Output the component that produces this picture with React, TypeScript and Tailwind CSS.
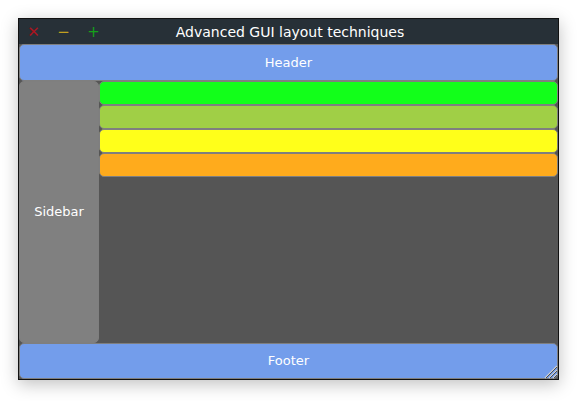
const bars = ['bg-[#12ff1a]', 'bg-[#a0cf46]', 'bg-[#ffff1a]', 'bg-[#ffab1c]'];

function ResizeGrip() {
  return (
    <svg width="14" height="14" viewBox="0 0 14 14" className="absolute bottom-0 right-0">
      <path d="M1 13L13 1M5 13L13 5M9 13L13 9" stroke="#d0d0d0" strokeWidth="1.2" />
      <path d="M2 13L13 2M6 13L13 6M10 13L13 10" stroke="#333" strokeWidth="0.8" />
    </svg>
  );
}

export default function App() {
  return (
    <div className="w-[580px] h-[401px] bg-white pt-[18px] pl-[18px]" style={{ fontFamily: "'DejaVu Sans', sans-serif" }}>
      <div className="relative w-[541px] h-[362px] flex flex-col border border-[#111] bg-[#555555] shadow-[0_4px_16px_rgba(0,0,0,0.25)]">
        {/* Title bar */}
        <div className="relative h-[25px] bg-[#273037] flex items-center shrink-0">
          <div className="flex items-center gap-[17px] pl-[8px] pt-[2px] text-[15px] leading-none">
            <span className="w-[13px] text-center text-[#a8141f]">✕</span>
            <span className="w-[13px] text-center text-[#c2a020]">−</span>
            <span className="w-[13px] text-center text-[#15a11a]">+</span>
          </div>
          <div className="absolute inset-0 flex items-center justify-center text-white text-[14px] pl-[3px] pt-[2px]">
            Advanced GUI layout techniques
          </div>
        </div>

        {/* Header */}
        <div className="h-[37px] shrink-0 rounded-[5px] border border-[#7f7f7f] bg-[#739deb] text-white text-[13px] flex items-center justify-center">
          Header
        </div>

        {/* Middle */}
        <div className="flex flex-1 min-h-0">
          <div className="w-[80px] shrink-0 rounded-[5px] border border-[#7f7f7f] bg-[#808080] text-white text-[13px] flex items-center justify-center">
            Sidebar
          </div>
          <div className="flex-1 flex flex-col">
            {bars.map((c) => (
              <div key={c} className={`h-[24px] rounded-[5px] border border-[#7f7f7f] ${c}`} />
            ))}
          </div>
        </div>

        {/* Footer */}
        <div className="h-[36px] shrink-0 rounded-[5px] border border-[#7f7f7f] bg-[#739deb] text-white text-[13px] flex items-center justify-center">
          Footer
        </div>
        <ResizeGrip />
      </div>
    </div>
  );
}
